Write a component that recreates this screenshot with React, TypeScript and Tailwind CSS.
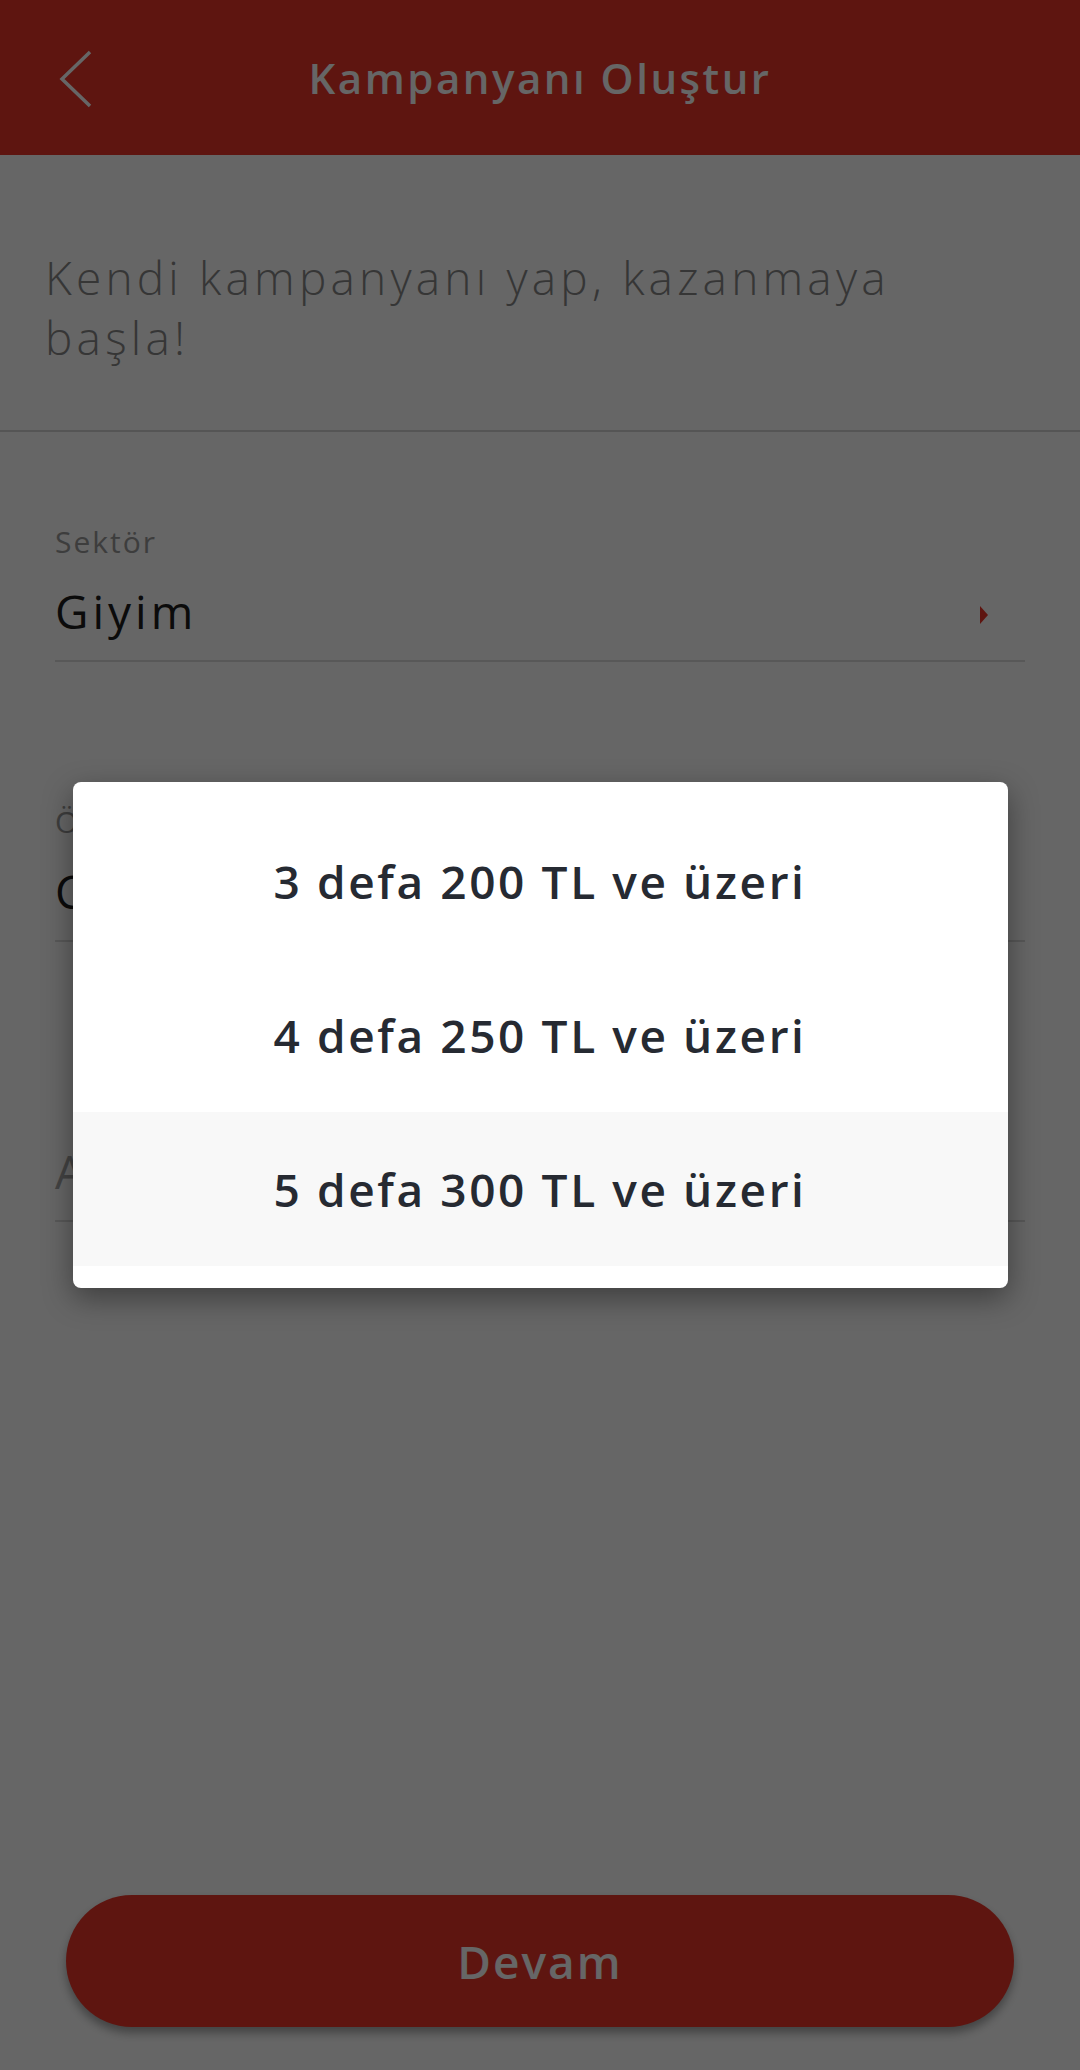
import { useState } from "react";

const options = [
  "3 defa 200 TL ve üzeri",
  "4 defa 250 TL ve üzeri",
  "5 defa 300 TL ve üzeri",
];

function Field({
  label,
  value,
  placeholder,
  arrow,
}: {
  label?: string;
  value?: string;
  placeholder?: string;
  arrow?: boolean;
}) {
  return (
    <div className="mx-[55px] border-b-2 border-[#dcdcdc] pb-[19px]">
      <div className="h-[40px] text-[30px] leading-[40px] tracking-[2px] text-[#9a9a9a]">
        {label}
      </div>
      <div className="mt-[19px] flex h-[60px] items-center justify-between">
        {value ? (
          <span className="text-[46px] leading-[60px] tracking-[4px] text-[#1c1c1c]">
            {value}
          </span>
        ) : (
          <span className="text-[46px] leading-[60px] tracking-[4px] text-[#a8a8a8]">
            {placeholder}
          </span>
        )}
        {arrow && (
          <svg width="10" height="20" viewBox="0 0 10 20" className="mr-[36px] mt-[8px]">
            <path d="M1 1 L9 10 L1 19 Z" fill="#eb3528" />
          </svg>
        )}
      </div>
    </div>
  );
}

function App() {
  const [selected, setSelected] = useState(2);

  return (
    <div
      className="relative flex h-[2070px] w-[1080px] flex-col overflow-hidden bg-white"
      style={{ fontFamily: "'Open Sans', 'Noto Sans', sans-serif" }}
    >
      <div className="grid h-[155px] shrink-0 grid-cols-[150px_1fr_150px] items-center bg-[#eb3528] text-white">
        <svg width="40" height="60" viewBox="0 0 40 60" className="ml-[56px]">
          <polyline
            points="34,4 6,31 34,58"
            fill="none"
            stroke="white"
            strokeWidth="3.5"
          />
        </svg>
        <h1 className="text-center text-[42px] font-semibold tracking-[2.5px]">
          Kampanyanı Oluştur
        </h1>
        <div />
      </div>

      <div className="border-b-2 border-[#d4d4d4] pb-[63px] pl-[45px] pr-[60px] pt-[92px]">
        <p className="text-[46px] font-light leading-[60px] tracking-[4.2px] text-[#888888]">
          Kendi kampanyanı yap, kazanmaya başla!
        </p>
      </div>

      <div className="mt-[90px]">
        <Field label="Sektör" value="Giyim" arrow />
      </div>
      <div className="mt-[140px]">
        <Field label="Ödül" value="Ciro" arrow />
      </div>
      <div className="mt-[140px]">
        <Field placeholder="Adet" arrow />
      </div>

      <button className="mx-[66px] mb-[43px] mt-auto h-[132px] rounded-full bg-[#eb3528] text-[46px] font-semibold tracking-[2px] text-white shadow-[0_6px_10px_rgba(0,0,0,0.35)]">
        Devam
      </button>

      <div className="absolute inset-0 flex items-center justify-center bg-black/60">
        <div className="w-[935px] rounded-[8px] bg-white py-[22px] shadow-[0_10px_30px_rgba(0,0,0,0.4)]">
          {options.map((o, i) => (
            <div
              key={o}
              onClick={() => setSelected(i)}
              className={
                "flex h-[154px] items-center justify-center text-[46px] font-semibold tracking-[2.6px] text-[#262a32] " +
                (i === selected ? "bg-[#f8f8f8]" : "bg-white")
              }
            >
              {o}
            </div>
          ))}
        </div>
      </div>
    </div>
  );
}

export default App;
